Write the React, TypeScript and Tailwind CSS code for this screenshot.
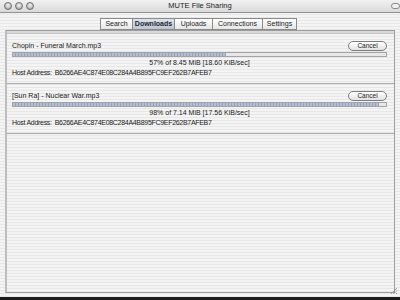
import React from 'react';

interface Transfer {
  file: string;
  percent: number;
  status: string;
  host: string;
}

const transfers: Transfer[] = [
  {
    file: 'Chopin - Funeral March.mp3',
    percent: 57,
    status: '57% of 8.45 MiB [18.60 KiB/sec]',
    host: 'B6266AE4C874E08C284A4B895FC9EF262B7AFEB7'
  },
  {
    file: '[Sun Ra] - Nuclear War.mp3',
    percent: 98,
    status: '98% of 7.14 MiB [17.56 KiB/sec]',
    host: 'B6266AE4C874E08C284A4B895FC9EF262B7AFEB7'
  }
];

const tabs = [
  { label: 'Search', w: 'w-[33px]' },
  { label: 'Downloads', w: 'w-[42px]' },
  { label: 'Uploads', w: 'w-[38px]' },
  { label: 'Connections', w: 'w-[50px]' },
  { label: 'Settings', w: 'w-[34px]' }
];

const stripes =
  'bg-[repeating-linear-gradient(180deg,#f4f4f4_0px,#f4f4f4_2px,#e7e7e7_2px,#e7e7e7_3px)]';

const Light = () => (
  <span className="h-[8px] w-[8px] rounded-full border border-[#6f6f6f] bg-[radial-gradient(circle_at_50%_35%,#f4f4f4_0%,#c4c4c4_55%,#8c8c8c_100%)]" />
);

const TransferRow = ({ t }: { t: Transfer }) => (
  <div className="flex h-[50px] flex-col border-b border-[#a9a9a9] pl-[5px] pr-[7px] pt-[7px]">
    <div className="flex h-[10px] items-center justify-between">
      <span className="leading-[10px]">{t.file}</span>
      <button
        type="button"
        className="flex h-[10px] w-[39px] items-center justify-center rounded-full border border-[#7d7d7d] bg-[linear-gradient(180deg,#ffffff,#e2e2e2)] text-[6.5px] leading-none text-[#222]"
      >
        Cancel
      </button>
    </div>
    <div className="mt-[1px] h-[5px] w-full border border-[#a3a3a3] bg-[#e6e8ec]">
      <div
        className="h-full bg-[repeating-linear-gradient(90deg,#b3bfd3_0px,#b3bfd3_2px,#94a3bd_2px,#94a3bd_3px)]"
        style={{ width: `${t.percent}%` }}
      />
    </div>
    <div className="mt-[1px] h-[10px] text-center leading-[10px]">{t.status}</div>
    <div className="flex h-[10px] gap-[3px] leading-[10px] tracking-[-0.3px]">
      <span>Host Address:</span>
      <span>{t.host}</span>
    </div>
  </div>
);

const App = () => {
  return (
    <div className="h-[300px] w-[400px] overflow-hidden bg-[#1c1c1c] font-['Liberation_Sans',Arial,sans-serif] text-[7px] text-[#1a1a1a]">
      <div className={`flex h-[297px] w-[400px] flex-col ${stripes}`}>
        <div className="flex h-[13px] shrink-0 items-center border-b border-[#8f8f8f] bg-[linear-gradient(180deg,#f1f1f1,#dadada)]">
          <div className="flex w-[40px] items-center gap-[3px] pl-[4px]">
            <Light />
            <Light />
            <Light />
          </div>
          <div className="flex-1 text-center text-[7.5px] leading-none text-[#222]">MUTE File Sharing</div>
          <div className="flex w-[40px] justify-end">
            <span className="h-[6px] w-[9px] rounded-full border border-[#8a8a8a] bg-[#efefef]" />
          </div>
        </div>

        <div className="ml-[100px] mt-[5px] flex h-[12px] shrink-0">
          {tabs.map((tab, i) => {
            const active = tab.label === 'Downloads';
            return (
              <div
                key={tab.label}
                className={`flex h-full items-center justify-center border-y border-r border-[#8a8a8a] ${tab.w} ${
                  i === 0 ? 'border-l' : ''
                } ${
                  active
                    ? 'bg-[linear-gradient(180deg,#dde2ea,#bcc5d2)] font-bold text-[#1d2430]'
                    : 'bg-[linear-gradient(180deg,#ffffff,#e6e6e6)] text-[#222]'
                }`}
              >
                {tab.label}
              </div>
            );
          })}
        </div>

        <div
          className={`relative mx-[5px] flex h-[263px] shrink-0 flex-col border border-[#9c9c9c] border-l-2 border-l-[#bdbdbd] ${stripes}`}
        >
          <div className="h-[3px] shrink-0 border-b border-[#c4c4c4] bg-[#dadada]" />
          {transfers.map((t) => (
            <TransferRow key={t.file} t={t} />
          ))}
          <svg
            className="absolute bottom-[-3px] right-[-4px]"
            width="8"
            height="8"
            viewBox="0 0 8 8"
          >
            <path d="M1 7 L7 1 M3.5 7 L7 3.5 M6 7 L7 6" stroke="#8a8a8a" strokeWidth="0.8" />
          </svg>
        </div>
      </div>
    </div>
  );
};

export default App;
